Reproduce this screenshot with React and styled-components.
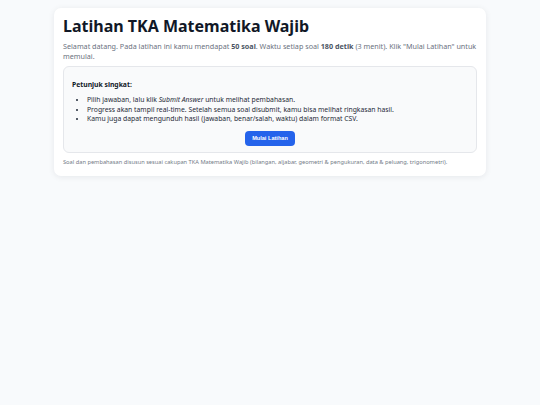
import React from 'react';
import styled, { createGlobalStyle } from 'styled-components';

const GlobalStyle = createGlobalStyle`
  body {
    margin: 0;
    background: #f8fafc;
    font-family: 'Noto Sans', 'Open Sans', sans-serif;
    color: #111827;
  }
`;

const Page = styled.main`
  padding: 8px 0;
  display: flex;
  justify-content: center;
`;

const Card = styled.section`
  width: 432px;
  box-sizing: border-box;
  background: #fff;
  border-radius: 7px;
  box-shadow: 0 1px 6px rgba(15, 23, 42, 0.08);
  padding: 7px 9px 9px;
`;

const Title = styled.h1`
  margin: 0 0 4px;
  font-size: 16px;
  font-weight: 700;
  line-height: 22px;
  color: #111827;
`;

const Intro = styled.p`
  margin: 0 0 5px;
  font-size: 7.2px;
  line-height: 10px;
  color: #6b7280;

  strong {
    color: #4b5563;
  }
`;

const Box = styled.div`
  border: 1px solid #e5e7eb;
  border-radius: 6px;
  background: #f9fafb;
  padding: 13px 8px 6px;
`;

const BoxTitle = styled.p`
  margin: 0 0 5px;
  font-size: 6.8px;
  font-weight: 700;
  line-height: 10px;
  color: #111827;
`;

const List = styled.ul`
  margin: 0 0 7px;
  padding-left: 15px;
  font-size: 6.8px;
  line-height: 9.6px;
  color: #1f2937;
`;

const Actions = styled.div`
  display: flex;
  justify-content: center;
`;

const Button = styled.button`
  background: #2563eb;
  color: #fff;
  border: none;
  border-radius: 4px;
  padding: 0 7px;
  height: 15px;
  font-family: 'Liberation Sans', Arial, sans-serif;
  font-size: 5.6px;
  font-weight: 700;
  cursor: pointer;
`;

const Footer = styled.p`
  margin: 5px 0 0;
  font-size: 5.7px;
  line-height: 9px;
  color: #737b87;
`;

export default function App() {
  return (
    <>
      <GlobalStyle />
      <Page>
        <Card>
          <Title>Latihan TKA Matematika Wajib</Title>
          <Intro>
            Selamat datang. Pada latihan ini kamu mendapat <strong>50 soal</strong>. Waktu setiap soal{' '}
            <strong>180 detik</strong> (3 menit). Klik "Mulai Latihan" untuk memulai.
          </Intro>
          <Box>
            <BoxTitle>Petunjuk singkat:</BoxTitle>
            <List>
              <li>
                Pilih jawaban, lalu klik <em>Submit Answer</em> untuk melihat pembahasan.
              </li>
              <li>
                Progress akan tampil real-time. Setelah semua soal disubmit, kamu bisa melihat ringkasan hasil.
              </li>
              <li>Kamu juga dapat mengunduh hasil (jawaban, benar/salah, waktu) dalam format CSV.</li>
            </List>
            <Actions>
              <Button>Mulai Latihan</Button>
            </Actions>
          </Box>
          <Footer>
            Soal dan pembahasan disusun sesuai cakupan TKA Matematika Wajib (bilangan, aljabar, geometri &amp;
            pengukuran, data &amp; peluang, trigonometri).
          </Footer>
        </Card>
      </Page>
    </>
  );
}
